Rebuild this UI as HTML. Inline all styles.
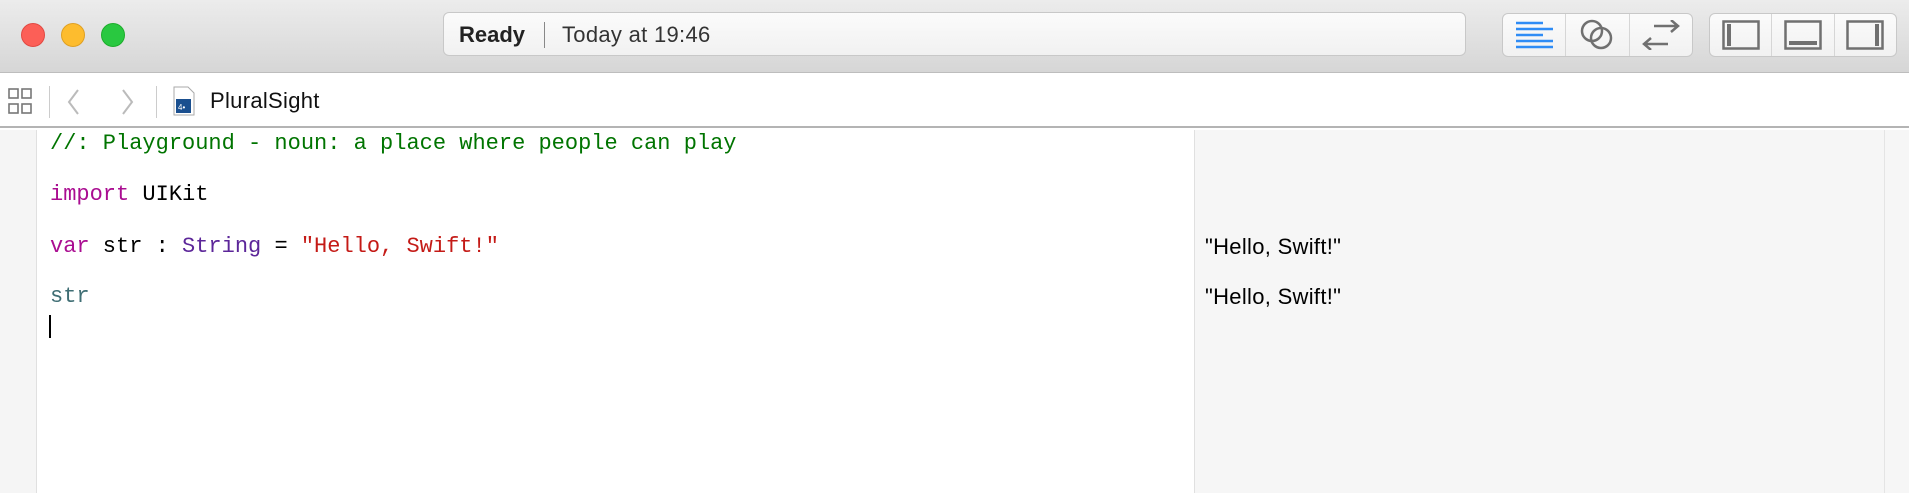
<!DOCTYPE html>
<html><head><meta charset="utf-8"><style>
*{margin:0;padding:0;box-sizing:border-box}
body{width:1909px;height:493px;overflow:hidden;background:#fff;font-family:"Liberation Sans",sans-serif;position:relative}
.abs{position:absolute}
.title{left:0;top:0;width:1909px;height:73px;background:linear-gradient(#ececec,#d6d6d6);border-bottom:1px solid #bdbdbd}
.tl{width:24px;height:24px;border-radius:50%;top:23px}
.status{left:443px;top:12px;width:1023px;height:44px;background:linear-gradient(#fbfbfb,#f1f1f1);border:1px solid #c8c8c8;border-radius:6px}
.grp{top:13px;height:44px;background:linear-gradient(#fbfbfb,#f1f1f1);border:1px solid #c8c8c8;border-radius:6px;display:flex}
.grp div{flex:1;border-right:1px solid #d6d6d6;display:flex;align-items:center;justify-content:center}
.grp div:last-child{border-right:none}
.toolbar{left:0;top:74px;width:1909px;height:54px;background:#fff;border-bottom:2px solid #b4b4b4}
.code{font-family:"Liberation Mono",monospace;font-size:22px;white-space:pre;line-height:26px}
.res{font-size:22px;color:#000;letter-spacing:0.3px}
</style></head><body>
<div class="abs title"></div>
<div class="abs tl" style="left:21px;background:#fc5f57;border:1px solid #e14942"></div>
<div class="abs tl" style="left:61px;background:#fdbc2e;border:1px solid #dfa023"></div>
<div class="abs tl" style="left:101px;background:#29c840;border:1px solid #1dad2b"></div>
<div class="abs status"></div>
<div class="abs" style="left:459px;top:22px;font-size:22px;font-weight:bold;color:#222">Ready</div>
<div class="abs" style="left:544px;top:22px;width:1px;height:26px;background:#888"></div>
<div class="abs" style="left:562px;top:22px;font-size:22px;color:#333;letter-spacing:0.3px">Today at 19:46</div>
<div class="abs grp" style="left:1502px;width:191px">
<div><svg width="40" height="30"><g stroke="#2f8cf5" stroke-width="2.5"><path d="M2 3h27M2 9h37M2 15h27M2 21h37M2 27h37"/></g></svg></div>
<div><svg width="36" height="34"><g fill="none" stroke="#707070" stroke-width="2.5"><circle cx="13" cy="13" r="10"/><circle cx="22" cy="20" r="10"/></g></svg></div>
<div><svg width="42" height="30"><g fill="none" stroke="#707070" stroke-width="2.5"><path d="M14 6h24M31 0l7 6-7 6M4 24h24M11 18l-7 6 7 6"/></g></svg></div>
</div>
<div class="abs grp" style="left:1709px;width:188px">
<div><svg width="38" height="30"><rect x="1.5" y="1.5" width="35" height="27" fill="none" stroke="#707070" stroke-width="2.5"/><rect x="5" y="4" width="4" height="22" fill="#707070"/></svg></div>
<div><svg width="38" height="30"><rect x="1.5" y="1.5" width="35" height="27" fill="none" stroke="#707070" stroke-width="2.5"/><rect x="5" y="21" width="28" height="4" fill="#707070"/></svg></div>
<div><svg width="38" height="30"><rect x="1.5" y="1.5" width="35" height="27" fill="none" stroke="#707070" stroke-width="2.5"/><rect x="29" y="4" width="4" height="22" fill="#707070"/></svg></div>
</div>
<div class="abs toolbar"></div>
<svg class="abs" style="left:8px;top:88px" width="26" height="28"><g fill="none" stroke="#777" stroke-width="1.6"><rect x="1" y="1" width="9" height="9"/><rect x="14" y="1" width="9" height="9"/><rect x="1" y="16" width="9" height="9"/><rect x="14" y="16" width="9" height="9"/></g></svg>
<div class="abs" style="left:49px;top:86px;width:1px;height:32px;background:#ccc"></div>
<svg class="abs" style="left:66px;top:88px" width="16" height="28"><path d="M12 2L3 14l9 12" fill="none" stroke="#bbb" stroke-width="2"/></svg>
<svg class="abs" style="left:120px;top:88px" width="16" height="28"><path d="M3 2l9 12-9 12" fill="none" stroke="#bbb" stroke-width="2"/></svg>
<div class="abs" style="left:156px;top:86px;width:1px;height:32px;background:#ccc"></div>
<svg class="abs" style="left:173px;top:86px" width="22" height="30"><path d="M1 1h14l6 6v22H1z" fill="#fff" stroke="#aaa"/><rect x="3" y="13" width="15" height="14" fill="#1a4f8f"/><text x="5" y="24" font-size="8" fill="#fff" font-family="Liberation Sans">4•</text></svg>
<div class="abs" style="left:210px;top:88px;font-size:22px;color:#111;letter-spacing:0.3px">PluralSight</div>
<div class="abs" style="left:0;top:130px;width:37px;height:363px;background:#f5f5f5;border-right:1px solid #e0e0e0"></div>
<div class="abs" style="left:1194px;top:130px;width:690px;height:363px;background:#f6f6f6;border-left:1px solid #e0e0e0"></div>
<div class="abs" style="left:1884px;top:130px;width:25px;height:363px;background:#f6f6f6;border-left:1px solid #e4e4e4"></div>
<div class="abs code" style="left:50px;top:131px;color:#007400">//: Playground - noun: a place where people can play</div>
<div class="abs code" style="left:50px;top:182px"><span style="color:#aa0d91">import</span> UIKit</div>
<div class="abs code" style="left:50px;top:234px"><span style="color:#aa0d91">var</span> str : <span style="color:#5c2699">String</span> = <span style="color:#c41a16">"Hello, Swift!"</span></div>
<div class="abs code" style="left:50px;top:284px;color:#3f6e74">str</div>
<div class="abs" style="left:49px;top:315px;width:2px;height:23px;background:#000"></div>
<div class="abs res" style="left:1205px;top:234px">"Hello, Swift!"</div>
<div class="abs res" style="left:1205px;top:284px">"Hello, Swift!"</div>
</body></html>
